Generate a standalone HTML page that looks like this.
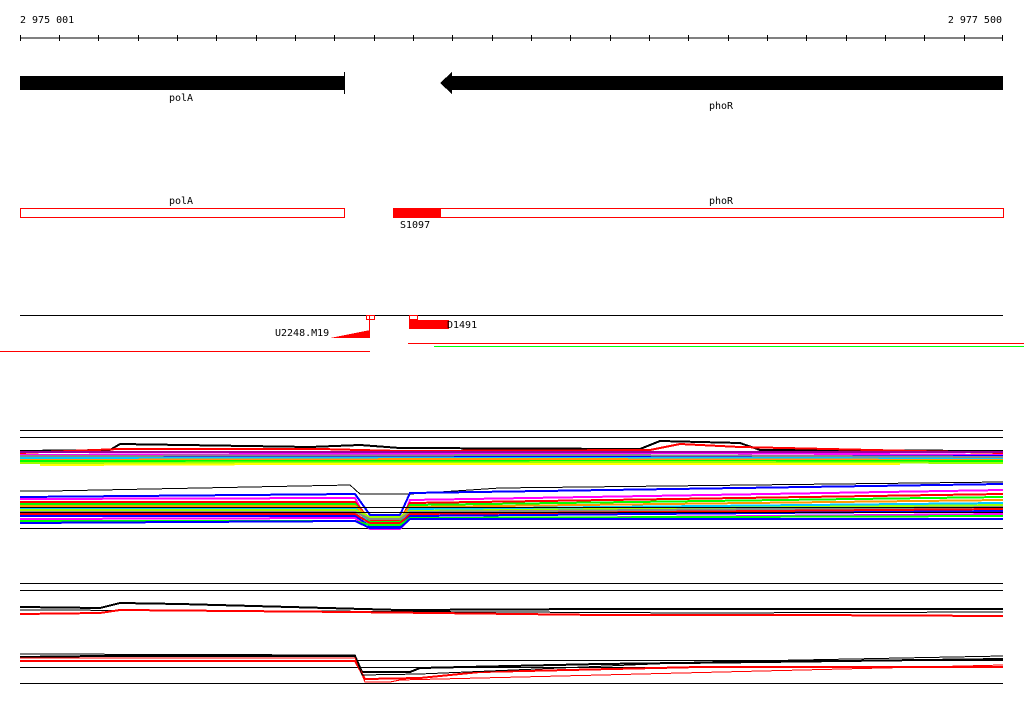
<!DOCTYPE html>
<html><head><meta charset="utf-8"><style>
html,body{margin:0;padding:0;background:#fff;width:1024px;height:714px;overflow:hidden}
svg{display:block}
text{font-family:"DejaVu Sans Mono","Liberation Mono",monospace;font-size:10px;fill:#000}
</style></head><body>
<svg width="1024" height="714" viewBox="0 0 1024 714" xmlns="http://www.w3.org/2000/svg" shape-rendering="crispEdges">
<text x="20" y="23">2 975 001</text>
<text x="1002" y="23" text-anchor="end">2 977 500</text>
<line x1="20" y1="38" x2="1003" y2="38" stroke="#000"/>
<g stroke="#000">
<line x1="20.5" y1="35" x2="20.5" y2="41"/><line x1="59.5" y1="35" x2="59.5" y2="41"/><line x1="98.5" y1="35" x2="98.5" y2="41"/><line x1="138.5" y1="35" x2="138.5" y2="41"/><line x1="177.5" y1="35" x2="177.5" y2="41"/><line x1="216.5" y1="35" x2="216.5" y2="41"/><line x1="256.5" y1="35" x2="256.5" y2="41"/><line x1="295.5" y1="35" x2="295.5" y2="41"/><line x1="334.5" y1="35" x2="334.5" y2="41"/><line x1="374.5" y1="35" x2="374.5" y2="41"/><line x1="413.5" y1="35" x2="413.5" y2="41"/><line x1="452.5" y1="35" x2="452.5" y2="41"/><line x1="492.5" y1="35" x2="492.5" y2="41"/><line x1="531.5" y1="35" x2="531.5" y2="41"/><line x1="570.5" y1="35" x2="570.5" y2="41"/><line x1="610.5" y1="35" x2="610.5" y2="41"/><line x1="649.5" y1="35" x2="649.5" y2="41"/><line x1="688.5" y1="35" x2="688.5" y2="41"/><line x1="728.5" y1="35" x2="728.5" y2="41"/><line x1="767.5" y1="35" x2="767.5" y2="41"/><line x1="806.5" y1="35" x2="806.5" y2="41"/><line x1="846.5" y1="35" x2="846.5" y2="41"/><line x1="885.5" y1="35" x2="885.5" y2="41"/><line x1="924.5" y1="35" x2="924.5" y2="41"/><line x1="964.5" y1="35" x2="964.5" y2="41"/><line x1="1002.5" y1="35" x2="1002.5" y2="41"/>
</g>
<rect x="20" y="76" width="324" height="14" fill="#000"/>
<line x1="344.5" y1="72" x2="344.5" y2="94" stroke="#000"/>
<text x="181" y="101" text-anchor="middle">polA</text>
<polygon points="440,83 452,72 452,76 1003,76 1003,90 452,90 452,94" fill="#000"/>
<text x="721" y="109" text-anchor="middle">phoR</text>
<text x="181" y="204" text-anchor="middle">polA</text>
<text x="721" y="204" text-anchor="middle">phoR</text>
<rect x="20.5" y="208.5" width="324" height="9" fill="none" stroke="#f00"/>
<rect x="393.5" y="208.5" width="610" height="9" fill="none" stroke="#f00"/>
<rect x="393" y="208" width="48" height="10" fill="#f00"/>
<text x="400" y="228">S1097</text>
<line x1="20" y1="315.5" x2="1003" y2="315.5" stroke="#000"/>
<rect x="366.5" y="315.5" width="8" height="4" fill="none" stroke="#f00"/>
<rect x="409.5" y="315.5" width="8" height="4" fill="none" stroke="#f00"/>
<polygon points="330,338 370,330 370,338" fill="#f00"/>
<line x1="369.5" y1="316" x2="369.5" y2="338" stroke="#f00"/>
<rect x="409" y="320" width="40" height="9" fill="#f00"/>
<text x="447" y="328">D1491</text>
<text x="275" y="336">U2248.M19</text>
<line x1="0" y1="351.5" x2="370" y2="351.5" stroke="#f00"/>
<line x1="408" y1="343.5" x2="1024" y2="343.5" stroke="#f00"/>
<line x1="434" y1="346.5" x2="1024" y2="346.5" stroke="#0f0"/>
<g stroke="#000" fill="none">
<line x1="20" y1="430.5" x2="1003" y2="430.5"/><line x1="20" y1="437.5" x2="1003" y2="437.5"/><line x1="20" y1="528.5" x2="1003" y2="528.5"/>
<line x1="20" y1="583.5" x2="1003" y2="583.5"/><line x1="20" y1="590.5" x2="1003" y2="590.5"/><line x1="20" y1="683.5" x2="1003" y2="683.5"/>
</g>
<g fill="none" stroke-width="2">
<polyline stroke="#000" points="20,451 110,450 120,444 310,447 360,445 400,448 640,449 660,441 740,443 760,450 1003,451"/>
<polyline stroke="#f00" points="20,453 120,449 320,449 400,451 650,450 680,444 740,447 1003,453"/>
<polyline stroke="#f0f" points="20,455 300,454 700,453 1003,455"/>
<polyline stroke="#00f" points="20,457 400,456 1003,456"/>
<polyline stroke="#0cf" points="20,458 500,458 1003,458"/>
<polyline stroke="#f90" points="20,460 500,459 1003,460"/>
<polyline stroke="#0f0" points="20,461 600,461 1003,461"/>
<polyline stroke="#9f0" points="20,463 700,462 1003,463"/>
<polyline stroke="#ff0" points="40,465 300,464 900,464"/>
<polyline stroke="#888" points="20,456 600,455 1003,457"/>
<polyline stroke="#909" points="20,452 500,452 1003,452"/>
<polyline stroke="#000" stroke-width="1" points="20,491 50,491 350,485 360,494 410,494 500,488 1003,482"/>
<polyline stroke="#00f" points="20,497 355,494 370,515 400,515 410,493 1003,484"/>
<polyline stroke="#f0f" points="20,499 355,498 370,527 400,527 410,500 1003,490"/>
<polyline stroke="#f00" points="20,502 355,502 370,520 400,520 410,503 1003,494"/>
<polyline stroke="#0f0" points="20,504 355,504 370,522 400,522 410,505 1003,497"/>
<polyline stroke="#f90" points="20,506 355,506 370,518 400,518 410,507 1003,500"/>
<polyline stroke="#0cf" points="20,508 355,508 370,524 400,524 410,509 1003,503"/>
<polyline stroke="#9f0" points="20,510 355,510 370,517 400,517 410,511 1003,505"/>
<polyline stroke="#888" points="20,512 355,512 370,519 400,519 410,512 1003,507"/>
<polyline stroke="#f00" points="20,514 355,514 370,523 400,523 410,514 1003,509"/>
<polyline stroke="#00f" points="20,516 355,516 370,526 400,526 410,516 1003,511"/>
<polyline stroke="#f0f" points="20,519 355,518 370,529 400,529 410,519 1003,514"/>
<polyline stroke="#0f0" points="20,521 355,521 370,525 400,525 410,518 1003,516"/>
<polyline stroke="#00f" points="20,523 355,521 370,528 400,528 410,519 1003,519"/>
</g>
<g fill="none" stroke="#000" stroke-width="1">
<line x1="20" y1="507.5" x2="1003" y2="507.5"/><line x1="20" y1="512.5" x2="1003" y2="512.5"/>
<line x1="20" y1="660.5" x2="1003" y2="660.5"/><line x1="20" y1="667.5" x2="1003" y2="667.5"/>
</g>
<g fill="none" stroke-width="2">
<polyline stroke="#000" points="20,607 100,608 120,603 180,604 400,610 600,609 1003,609"/>
<polyline stroke="#000" stroke-width="1" points="20,610 300,611 700,613 1003,612"/>
<polyline stroke="#f00" points="20,614 100,613 120,610 350,612 600,615 800,615 1003,616"/>
<polyline stroke="#000" points="20,657 100,656 355,656 362,672 410,672 420,668 600,664 1003,659"/>
<polyline stroke="#f00" points="20,661 355,661 365,679 420,678 480,672 700,667 1003,667"/>
<polyline stroke="#f00" stroke-width="1" points="20,658 355,658 365,682 390,682 400,680 1003,665"/>
<polyline stroke="#000" stroke-width="1" points="20,654 355,655 362,675 420,674 700,662 1003,656"/>
</g>
</svg>
</body></html>
